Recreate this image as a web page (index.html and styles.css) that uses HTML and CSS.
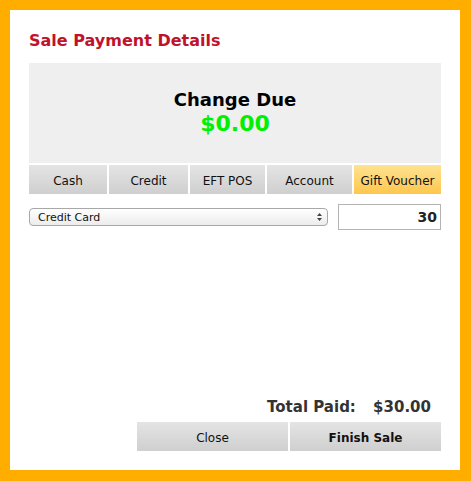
FILE: index.html
```html
<!DOCTYPE html>
<html lang="en">

<head>
    <meta charset="UTF-8">
    <title>Sale Payment Details</title>
    <link rel="stylesheet" href="styles.css">
</head>

<body>
    <div class="dialog">
        <h2 class="title">Sale Payment Details</h2>

        <div class="change-box">
            <div class="change-label">Change Due</div>
            <div class="change-amount">$0.00</div>
        </div>

        <div class="tabs">
            <div class="tab tab-cash">Cash</div>
            <div class="tab tab-credit">Credit</div>
            <div class="tab tab-eft">EFT POS</div>
            <div class="tab tab-account">Account</div>
            <div class="tab tab-gift active">Gift Voucher</div>
        </div>

        <div class="payment-row">
            <div class="select-wrap">
                <select class="card-select">
                    <option>Credit Card</option>
                </select>
                <svg class="select-arrows" width="7" height="10" viewBox="0 0 7 10">
                    <path d="M1 4 L3.5 1 L6 4 Z M1 6 L3.5 9 L6 6 Z" fill="#444"/>
                </svg>
            </div>
            <input type="text" class="amount-input" value="30">
        </div>

        <div class="footer">
            <div class="total">
                <span>Total Paid:</span>
                <span>$30.00</span>
            </div>
            <div class="buttons">
                <button class="btn">Close</button>
                <button class="btn btn-finish">Finish Sale</button>
            </div>
        </div>
    </div>
</body>

</html>
```

FILE: styles.css
```css
body {
    font-family: "DejaVu Sans", Verdana, sans-serif;
    background-color: #ffae00;
    margin: 0;
    padding: 10px 11px 11px 10px;
}

.dialog {
    background: #fff;
    height: 460px;
    padding: 0 19px 19px 19px;
    box-sizing: border-box;
    display: flex;
    flex-direction: column;
}

.title {
    margin: 20px 0 0 0;
    font-size: 16px;
    line-height: 22px;
    color: #c0122b;
    height: 33px;
}

.change-box {
    background: #efefef;
    height: 100px;
    text-align: center;
    padding-top: 27px;
    box-sizing: border-box;
}

.change-label {
    font-size: 18px;
    font-weight: bold;
    line-height: 20px;
    color: #000;
}

.change-amount {
    font-size: 22px;
    font-weight: bold;
    line-height: 28px;
    color: #00f000;
}

.tabs {
    display: flex;
    gap: 2px;
    margin-top: 2px;
}

.tab {
    height: 29px;
    line-height: 32px;
    text-align: center;
    font-size: 12px;
    color: #111;
    background: linear-gradient(#e4e4e4, #cfcfcf);
}

.tab-cash { width: 78px; }
.tab-credit { width: 79px; }
.tab-eft { width: 75px; }
.tab-account { width: 85px; }
.tab-gift { width: 87px; }

.tab.active {
    background: linear-gradient(#ffe391, #ffc64e);
}

.payment-row {
    display: flex;
    justify-content: space-between;
    align-items: center;
    margin-top: 10px;
}

.select-wrap {
    position: relative;
    width: 299px;
}

.card-select {
    -webkit-appearance: none;
    appearance: none;
    width: 100%;
    height: 18px;
    padding: 0 0 0 8px;
    font-family: "DejaVu Sans", Verdana, sans-serif;
    font-size: 11px;
    color: #111;
    border: 1px solid #a8a8a8;
    border-radius: 4px;
    background: linear-gradient(#ffffff, #ececec);
    display: block;
}

.select-arrows {
    position: absolute;
    right: 5px;
    top: 4px;
}

.amount-input {
    width: 103px;
    height: 26px;
    box-sizing: border-box;
    border: 1px solid #b4b4b4;
    padding: 0 3px;
    text-align: right;
    font-family: "DejaVu Sans", Verdana, sans-serif;
    font-size: 14px;
    font-weight: bold;
    color: #222;
}

.footer {
    margin-top: auto;
    display: flex;
    flex-direction: column;
    align-items: flex-end;
}

.total {
    font-size: 15px;
    font-weight: bold;
    color: #333;
    padding-right: 10px;
    line-height: 20px;
    margin-bottom: 5px;
}

.total span + span {
    margin-left: 12px;
}

.buttons {
    display: flex;
    gap: 2px;
}

.btn {
    width: 151px;
    height: 29px;
    border: none;
    font-family: "DejaVu Sans", Verdana, sans-serif;
    font-size: 12px;
    color: #111;
    background: linear-gradient(#e4e4e4, #cfcfcf);
    padding: 2px 0 0 0;
}

.btn-finish {
    font-weight: bold;
}
```
